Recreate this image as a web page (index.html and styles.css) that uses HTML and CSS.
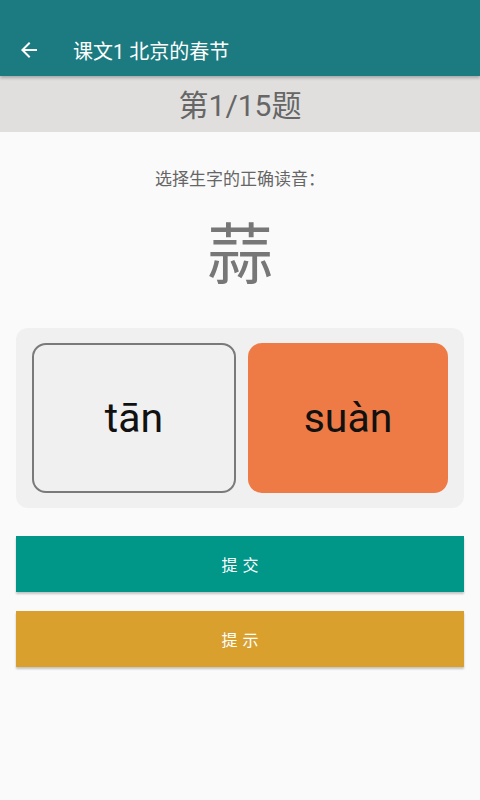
FILE: index.html
```html
<!DOCTYPE html>
<html lang="zh">
<head>
<meta charset="utf-8">
<link rel="stylesheet" href="styles.css">
</head>
<body>
<div class="app">
  <header class="appbar">
    <div class="toolbar">
      <svg class="back" width="24" height="24" viewBox="0 0 24 24"><path d="M20 11H7.83l5.59-5.59L12 4l-8 8 8 8 1.41-1.41L7.83 13H20v-2z" fill="#fff"/></svg>
      <span class="title">课文1 北京的春节</span>
    </div>
  </header>
  <div class="progress">第1/15题</div>
  <main class="content">
    <p class="prompt">选择生字的正确读音：</p>
    <div class="hanzi">蒜</div>
    <div class="options">
      <div class="option plain">tān</div>
      <div class="option selected">suàn</div>
    </div>
    <div class="btn submit">提交</div>
    <div class="btn hint">提示</div>
  </main>
</div>
</body>
</html>
```

FILE: styles.css
```css
* { box-sizing: border-box; }
html, body { margin: 0; padding: 0; }
body {
  width: 480px;
  height: 800px;
  background: #fafafa;
  font-family: Roboto, "Noto Sans CJK SC", "Noto Sans", sans-serif;
  overflow: hidden;
}
.appbar {
  background: #1b7b80;
  height: 76px;
  padding-top: 24px;
  box-shadow: 0 2px 3px rgba(0,0,0,0.25);
  position: relative;
  z-index: 2;
}
.toolbar {
  height: 52px;
  display: flex;
  align-items: center;
  padding-left: 17px;
}
.back { display: block; }
.title {
  color: #fff;
  font-size: 20px;
  margin-left: 32px;
  font-weight: 400;
}
.progress {
  background: #e0dfde;
  height: 56px;
  padding-bottom: 3px;
  display: flex;
  align-items: center;
  justify-content: center;
  font-size: 30px;
  color: #666;
}
.content {
  padding: 0 16px;
  display: flex;
  flex-direction: column;
}
.prompt {
  margin: 36px 0 0;
  text-align: center;
  font-size: 17px;
  color: #666;
  line-height: 22px;
}
.hanzi {
  margin-top: 26px;
  text-align: center;
  font-size: 66px;
  line-height: 80px;
  color: #777;
}
.options {
  margin-top: 32px;
  background: #f0f0f0;
  border-radius: 12px;
  padding: 15px 16px;
  display: flex;
  gap: 12px;
}
.option {
  flex: 1;
  height: 150px;
  border-radius: 14px;
  display: flex;
  align-items: center;
  justify-content: center;
  font-size: 41px;
  color: #111;
}
.option.plain {
  border: 2px solid #7a7a7a;
  background: #f0f0f0;
}
.option.selected {
  background: #ee7b45;
}
.btn {
  height: 56px;
  display: flex;
  align-items: center;
  justify-content: center;
  color: #fff;
  font-size: 16px;
  letter-spacing: 5px;
  padding-left: 5px;
  box-shadow: 0 2px 2px rgba(0,0,0,0.22);
}
.submit {
  margin-top: 28px;
  background: #009688;
}
.hint {
  margin-top: 19px;
  background: #d9a02e;
}
```
